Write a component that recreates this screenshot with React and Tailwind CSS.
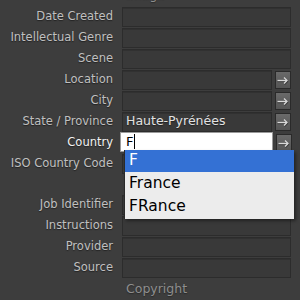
import React from "react";

function Arrow() {
  return (
    <div className="ml-[3px] w-[16px] h-[18px] border border-[#2a2a2a] bg-gradient-to-b from-[#6a6a6a] to-[#555555] flex items-center justify-center">
      <svg width="14" height="10" viewBox="0 0 14 10" className="mt-[3px]">
        <path d="M1.5 5.5H11.5" stroke="#1f1f1f" strokeWidth="1.4" opacity="0.5" />
        <path d="M8.5 2.5L11.5 5.5L8.5 8.5" stroke="#1f1f1f" strokeWidth="1.4" fill="none" opacity="0.5" />
        <path d="M1.5 4.5H11" stroke="#d8d8d8" strokeWidth="1.3" />
        <path d="M8 1.5L11 4.5L8 7.5" stroke="#d8d8d8" strokeWidth="1.3" fill="none" />
      </svg>
    </div>
  );
}

function Field({ label, value, button, active }) {
  return (
    <div className="flex items-center h-[21px]">
      <div
        className={
          "w-[113px] text-right text-[11.5px] leading-none whitespace-nowrap [text-shadow:0_1px_1px_#222] " +
          (active ? "text-[#f2f2f2]" : "text-[#c0c0c0]")
        }
      >
        {label}
      </div>
      <div className="ml-[9px] flex items-center">
        <div
          className={
            "h-[20px] border border-[#2c2c2c] bg-[#393939] shadow-[inset_0_1px_0_#313131] flex items-center pl-[3px] text-[12.5px] text-[#e2e2e2] whitespace-nowrap overflow-hidden [text-shadow:0_1px_1px_#222] " +
            (button ? "w-[150px]" : "w-[169px]")
          }
        >
          {value}
        </div>
        {button && <Arrow />}
      </div>
    </div>
  );
}

function CountryField() {
  return (
    <div className="flex items-center h-[21px]">
      <div className="w-[113px] text-right text-[11.5px] leading-none text-[#f2f2f2] [text-shadow:0_1px_1px_#222]">
        Country
      </div>
      <div className="ml-[7px] flex items-center">
        <div className="w-[153px] h-[20px] -mt-[2px] bg-white border border-[#9a9a9a] flex items-center pl-[5px] text-[13px] text-black">
          F<span className="ml-[1px] w-[1px] h-[15px] bg-black"></span>
        </div>
        <Arrow />
      </div>
    </div>
  );
}

function Header({ title, h }) {
  return (
    <div className={"flex items-center pl-[126px] text-[12.5px] text-[#8e8e8e] [text-shadow:0_1px_1px_#2a2a2a] " + h}>
      {title}
    </div>
  );
}

export default function App() {
  return (
    <div className="relative w-[300px] h-[300px] overflow-hidden bg-[#3d3d3d] font-['DejaVu_Sans',sans-serif]">
      <div className="-mt-[16px]">
        <Header title="Image" h="h-[22px]" />
        <Field label="Date Created" />
        <Field label="Intellectual Genre" />
        <Field label="Scene" />
        <Field label="Location" button />
        <Field label="City" button />
        <Field label="State / Province" value="Haute-Pyrénées" button />
        <CountryField />
        <Field label="ISO Country Code" />
        <Header title="" h="h-[20px]" />
        <Field label="Job Identifier" />
        <Field label="Instructions" />
        <Field label="Provider" />
        <Field label="Source" />
        <Header title="Copyright" h="h-[22px]" />
      </div>
      <div className="absolute left-[124px] top-[150px] w-[170px] h-[69px] bg-[#ececec] border-l border-[#2a2a2a] shadow-[2px_2px_3px_rgba(0,0,0,0.4)] text-[15.5px] leading-none">
        <div className="h-[22px] bg-[#3471d4] text-white flex items-center pl-[4px]">F</div>
        <div className="h-[23px] text-black flex items-center pl-[4px]">France</div>
        <div className="h-[23px] text-black flex items-center pl-[4px]">FRance</div>
      </div>
    </div>
  );
}
